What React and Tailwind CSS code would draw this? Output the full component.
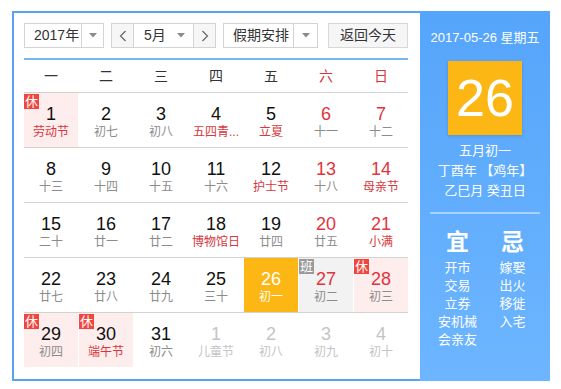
import React from "react";

const FONT = { fontFamily: '"Liberation Sans", Arial, "Noto Sans CJK SC", sans-serif' };

const rows = [
  [
    { d: 1, l: "劳动节", lr: true, badge: "休", pink: true },
    { d: 2, l: "初七" },
    { d: 3, l: "初八" },
    { d: 4, l: "五四青...", lr: true },
    { d: 5, l: "立夏", lr: true },
    { d: 6, l: "十一", nr: true },
    { d: 7, l: "十二", nr: true },
  ],
  [
    { d: 8, l: "十三" },
    { d: 9, l: "十四" },
    { d: 10, l: "十五" },
    { d: 11, l: "十六" },
    { d: 12, l: "护士节", lr: true },
    { d: 13, l: "十八", nr: true },
    { d: 14, l: "母亲节", nr: true, lr: true },
  ],
  [
    { d: 15, l: "二十" },
    { d: 16, l: "廿一" },
    { d: 17, l: "廿二" },
    { d: 18, l: "博物馆日", lr: true },
    { d: 19, l: "廿四" },
    { d: 20, l: "廿五", nr: true },
    { d: 21, l: "小满", nr: true, lr: true },
  ],
  [
    { d: 22, l: "廿七" },
    { d: 23, l: "廿八" },
    { d: 24, l: "廿九" },
    { d: 25, l: "三十" },
    { d: 26, l: "初一", today: true },
    { d: 27, l: "初二", nr: true, badge: "班", gray: true },
    { d: 28, l: "初三", nr: true, badge: "休", pink: true },
  ],
  [
    { d: 29, l: "初四", badge: "休", pink: true },
    { d: 30, l: "端午节", lr: true, badge: "休", pink: true },
    { d: 31, l: "初六" },
    { d: 1, l: "儿童节", other: true },
    { d: 2, l: "初八", other: true },
    { d: 3, l: "初九", other: true },
    { d: 4, l: "初十", other: true },
  ],
];

function Arrow() {
  return (
    <svg width="8" height="5" viewBox="0 0 8 5">
      <path d="M0 0 L8 0 L4 4.5 Z" fill="#8a8a8a" />
    </svg>
  );
}

function Chevron({ dir }) {
  return (
    <svg width="8" height="12" viewBox="0 0 8 12">
      <polyline
        points={dir === "left" ? "6.5,1 1.5,6 6.5,11" : "1.5,1 6.5,6 1.5,11"}
        fill="none"
        stroke="#666"
        strokeWidth="1.2"
      />
    </svg>
  );
}

function Cell({ c }) {
  let bg = "";
  if (c.today) bg = "bg-[#fdb714]";
  else if (c.pink) bg = "bg-[#fdeded]";
  else if (c.gray) bg = "bg-[#f2f2f2]";

  let numColor = "text-[#111]";
  if (c.today) numColor = "text-white";
  else if (c.other) numColor = "text-[#c4c4c4]";
  else if (c.nr) numColor = "text-[#e2343c]";

  let lunarColor = "text-[#8c8c8c]";
  if (c.today) lunarColor = "text-white";
  else if (c.other) lunarColor = "text-[#c4c4c4]";
  else if (c.lr) lunarColor = "text-[#d8363c]";

  return (
    <div className={`relative h-[54px] flex flex-col items-center pt-[12px] ${bg}`}>
      {c.badge && (
        <div
          className={`absolute left-0 top-[1px] w-[15px] h-[15px] flex items-center justify-center text-[13px] leading-none text-white ${
            c.badge === "休" ? "bg-[#f0463f]" : "bg-[#9a9a9a]"
          }`}
        >
          {c.badge}
        </div>
      )}
      <div className={`text-[18px] leading-[18px] ${numColor}`}>{c.d}</div>
      <div className={`text-center text-[12px] leading-[16px] mt-[1px] whitespace-nowrap ${lunarColor}`}>
        {c.l}
      </div>
    </div>
  );
}

export default function App() {
  return (
    <div className="w-[561px] h-[389px] bg-white pl-[12px] pt-[11px]" style={FONT}>
      <div className="flex w-[538px] h-[370px]">
        {/* Left part */}
        <div className="w-[408px] h-[370px] border-l-2 border-t-2 border-b-2 border-[#5aa3f0] pl-[10px] pr-[12px] pt-[10px]">
          {/* Controls */}
          <div className="flex items-center h-[25px] text-[14px] text-[#333] whitespace-nowrap">
            <div className="w-[80px] h-[25px] border border-[#d3d3d3] flex">
              <div className="w-[56px] flex items-center pl-[9px]">2017年</div>
              <div className="flex-1 border-l border-[#d3d3d3] flex items-center justify-center">
                <Arrow />
              </div>
            </div>
            <div className="ml-[7px] w-[105px] h-[25px] border border-[#d3d3d3] flex">
              <div className="w-[22px] bg-[#f6f6f6] border-r border-[#d3d3d3] flex items-center justify-center">
                <Chevron dir="left" />
              </div>
              <div className="flex-1 flex items-center pl-[10px] pr-[8px] justify-between">
                <span>5月</span>
                <Arrow />
              </div>
              <div className="w-[22px] bg-[#f6f6f6] border-l border-[#d3d3d3] flex items-center justify-center">
                <Chevron dir="right" />
              </div>
            </div>
            <div className="ml-[7px] w-[95px] h-[25px] border border-[#d3d3d3] flex">
              <div className="w-[69px] flex items-center pl-[9px]">假期安排</div>
              <div className="flex-1 border-l border-[#d3d3d3] flex items-center justify-center">
                <Arrow />
              </div>
            </div>
            <div className="ml-[10px] w-[80px] h-[25px] border border-[#d8d8d8] bg-[#f6f6f6] flex items-center justify-center">
              返回今天
            </div>
          </div>

          <div className="mt-[10px] h-[2px] bg-[#7ab6ee]" />

          {/* Weekday header */}
          <div className="grid grid-cols-7 gap-x-[1px] h-[32px] items-center text-[14px] text-[#333]">
            {["一", "二", "三", "四", "五", "六", "日"].map((w, i) => (
              <div key={w} className={`text-center ${i >= 5 ? "text-[#d8363c]" : ""}`}>
                {w}
              </div>
            ))}
          </div>

          {/* Rows */}
          {rows.map((r, i) => (
            <div key={i} className="border-t border-[#d2d2d2] grid grid-cols-7 gap-x-[1px]">
              {r.map((c, j) => (
                <Cell key={j} c={c} />
              ))}
            </div>
          ))}
        </div>

        {/* Right panel */}
        <div className="w-[130px] h-[370px] bg-gradient-to-b from-[#55a5fb] to-[#6db5ff] px-[10px] pt-[17px] flex flex-col items-center text-white">
          <div className="text-[13px] leading-[20px] whitespace-nowrap">2017-05-26 星期五</div>
          <div className="mt-[13px] w-[74px] h-[74px] bg-[#fdb714] shadow-[0_1px_3px_rgba(0,0,0,0.15)] flex items-center justify-center text-[52px] leading-none">
            26
          </div>
          <div className="mt-[6px] text-[13px] leading-[20px] text-center">
            <div>五月初一</div>
            <div>丁酉年 【鸡年】</div>
            <div>乙巳月 癸丑日</div>
          </div>
          <div className="mt-[11px] w-full h-[2px] bg-[#a5d1ff]" />
          <div className="mt-[14px] w-full grid grid-cols-2">
            <div className="flex flex-col items-center">
              <div className="text-[23px] leading-[28px] font-bold">宜</div>
              <div className="mt-[3px] text-[13px] leading-[18px] text-center">
                <div>开市</div>
                <div>交易</div>
                <div>立券</div>
                <div>安机械</div>
                <div>会亲友</div>
              </div>
            </div>
            <div className="flex flex-col items-center">
              <div className="text-[23px] leading-[28px] font-bold">忌</div>
              <div className="mt-[3px] text-[13px] leading-[18px] text-center">
                <div>嫁娶</div>
                <div>出火</div>
                <div>移徙</div>
                <div>入宅</div>
              </div>
            </div>
          </div>
        </div>
      </div>
    </div>
  );
}
